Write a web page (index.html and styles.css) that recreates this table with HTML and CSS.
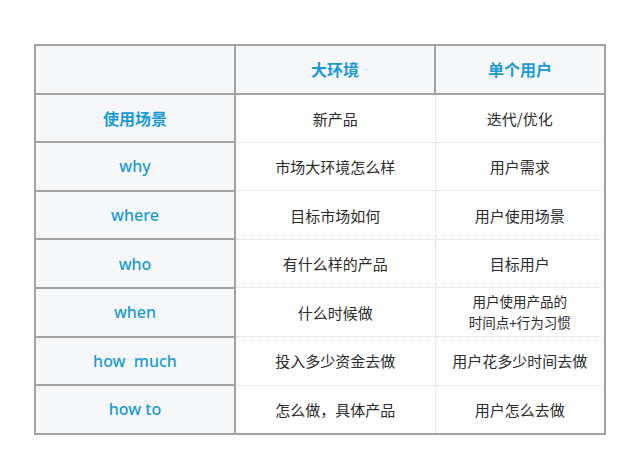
FILE: index.html
```html
<!DOCTYPE html>
<html lang="zh">
<head>
<meta charset="utf-8">
<link rel="stylesheet" href="styles.css">
</head>
<body>
<div class="page">
<table class="grid">
  <colgroup><col class="c1"><col class="c2"><col class="c3"></colgroup>
  <thead>
    <tr><th class="corner"></th><th class="hd">大环境</th><th class="hd last">单个用户</th></tr>
  </thead>
  <tbody>
    <tr><th class="rh zh">使用场景</th><td>新产品</td><td class="last">迭代/优化</td></tr>
    <tr><th class="rh">why</th><td>市场大环境怎么样</td><td class="last">用户需求</td></tr>
    <tr><th class="rh">where</th><td>目标市场如何</td><td class="last">用户使用场景</td></tr>
    <tr><th class="rh">who</th><td>有什么样的产品</td><td class="last">目标用户</td></tr>
    <tr><th class="rh">when</th><td>什么时候做</td><td class="last small">用户使用产品的<br>时间点+行为习惯</td></tr>
    <tr><th class="rh">how&nbsp;&nbsp;much</th><td>投入多少资金去做</td><td class="last">用户花多少时间去做</td></tr>
    <tr><th class="rh">how to</th><td>怎么做，具体产品</td><td class="last">用户怎么去做</td></tr>
  </tbody>
</table>
</div>
</body>
</html>
```

FILE: styles.css
```css
html, body {
  margin: 0;
  background: #ffffff;
}
.page {
  padding: 44px 0 0 34px;
  font-family: "Noto Sans CJK SC", "Noto Sans", sans-serif;
}
.grid {
  border-collapse: collapse;
  border: 2px solid #a3a3a3;
  table-layout: fixed;
}
.c1 { width: 200px; }
.c2 { width: 200px; }
.c3 { width: 170px; }
.grid th, .grid td {
  height: 46.6px;
  padding: 0;
  text-align: center;
  vertical-align: middle;
}
.corner, .hd {
  background: #f6f7f9;
  border-bottom: 2px solid #a3a3a3;
  border-right: 2px solid #a3a3a3;
}
.hd {
  color: #1a9ad4;
  font-size: 16px;
  font-weight: 700;
}
.rh {
  background: #f6f7f9;
  border-right: 2px solid #a3a3a3;
  border-bottom: 2px solid #a3a3a3;
  color: #1a9ad4;
  font-size: 16px;
  font-weight: 500;
  font-family: "Noto Sans", "Noto Sans CJK SC", sans-serif;
}
.rh.zh {
  font-family: "Noto Sans CJK SC", sans-serif;
  font-weight: 700;
}
.grid td {
  color: #2b2b2b;
  font-size: 15px;
  border-bottom: 1px dotted #d6d6d6;
  border-right: 1px dotted #d6d6d6;
}
.grid td.last, .grid th.last {
  border-right: 2px solid #a3a3a3;
}
.grid td.small {
  font-size: 13.5px;
  line-height: 21px;
}
tbody tr:last-child td, tbody tr:last-child th {
  border-bottom: 2px solid #a3a3a3;
}
```
